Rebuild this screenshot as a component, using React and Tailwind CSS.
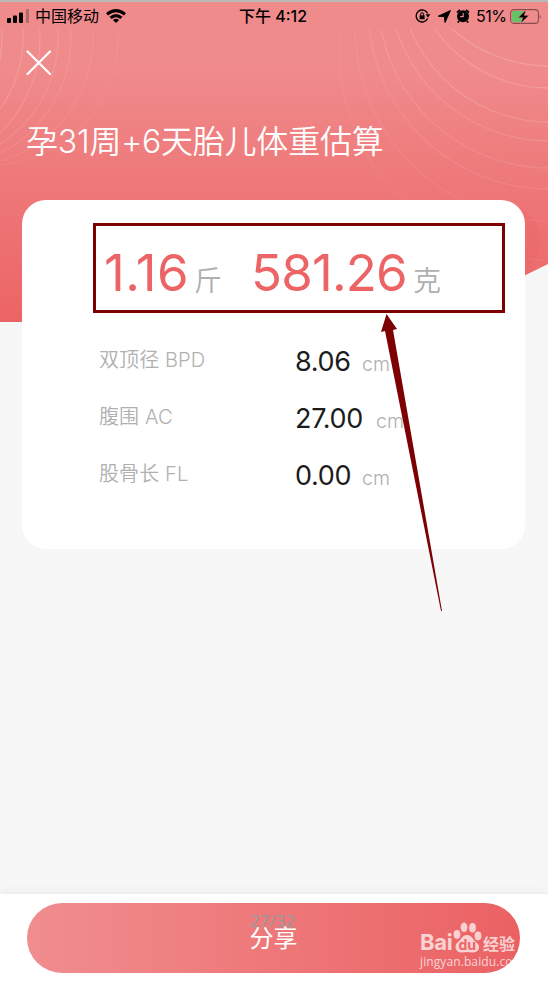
const rows = [
  { label: '双顶径 BPD', value: '8.06', w: 'w-[54px]' },
  { label: '腹围 AC', value: '27.00', w: 'w-[68px]' },
  { label: '股骨长 FL', value: '0.00', w: 'w-[54px]' },
];

const leftArcs = [[2, 110], [23, 121], [40, 133], [58, 126], [71, 129], [93, 128], [118, 127]];
const rightArcs = [[260, 210], [221, 194], [189, 181], [168, 171], [141, 160], [122, 150], [88, 140], [66, 146]];

function HeaderArt() {
  return (
    <svg className="absolute left-0 top-0" width="548" height="322" viewBox="0 0 548 322">
      <defs>
        <linearGradient id="head" x1="0" y1="0" x2="0" y2="1">
          <stop offset="0" stopColor="#f08b8c" />
          <stop offset="0.2" stopColor="#f08b8c" />
          <stop offset="0.62" stopColor="#ee7677" />
          <stop offset="1" stopColor="#ec6465" />
        </linearGradient>
        <clipPath id="shape"><path d="M0 2H548V264L430 322H0Z" /></clipPath>
        <clipPath id="below"><rect y="29" width="548" height="293" /></clipPath>
      </defs>
      <g clipPath="url(#shape)">
        <rect width="548" height="322" fill="url(#head)" />
        <circle cx="505" cy="240" r="35" fill="#ea5f62" fillOpacity="0.25" />
        <g clipPath="url(#below)" fill="none" stroke="#fff" strokeWidth="1.3">
          {leftArcs.map(([x, r], i) => (
            <circle key={x} cx={x - r} cy="38" r={r} strokeOpacity={0.16 - i * 0.018} />
          ))}
          {rightArcs.map(([b, r], i) => (
            <circle key={b} cx="549" cy={b - r} r={r} strokeOpacity={0.05 + i * 0.018} />
          ))}
        </g>
      </g>
      <rect width="548" height="2" fill="#b9b9b9" />
    </svg>
  );
}

function StatusBar() {
  return (
    <div className="relative flex h-[29px] items-center pt-[3px] text-black">
      <svg className="ml-[7px] shrink-0" width="22" height="14" viewBox="0 0 22 14">
        <rect x="0" y="9" width="4" height="5" rx="1" />
        <rect x="6" y="6.5" width="4" height="7.5" rx="1" />
        <rect x="12" y="3.5" width="4" height="10.5" rx="1" />
        <rect x="19" y="0" width="3" height="14" rx="1" opacity="0.25" />
      </svg>
      <span className="ml-[6px] w-[65px] whitespace-nowrap text-[16px] leading-[20px]">中国移动</span>
      <svg className="ml-[6px] shrink-0" width="20" height="14" viewBox="0 0 20 14">
        <path d="M0 4.3Q10-4.1 20 4.3L17.9 6.5Q10 0 2.1 6.5Z" />
        <path d="M3.5 7.8Q10 2.2 16.5 7.8L14.4 10Q10 6.3 5.6 10Z" />
        <path d="M6.9 11Q10 8.4 13.1 11L10 14Z" />
      </svg>
      <span className="ml-[113px] w-[69px] whitespace-nowrap text-[16px] font-medium leading-[20px]">下午 4:12</span>
      <svg className="ml-[107px] shrink-0" width="16" height="14" viewBox="0 0 16 14">
        <path d="M12.6 9.5A6 6 0 1 1 12.6 4.5" fill="none" stroke="#000" strokeWidth="1.4" />
        <path d="M10.8 5.3H15.2L13 8.8Z" />
        <rect x="4.6" y="6.2" width="5" height="4" rx="0.5" />
        <path d="M5.6 6.5V5.2a1.5 1.5 0 0 1 3 0V6.5" fill="none" stroke="#000" />
      </svg>
      <svg className="ml-[7px] shrink-0" width="13" height="13" viewBox="0 0 13 13">
        <path d="M0.3 6.2L12.4 0.6L7 12.4L6.4 6.6Z" stroke="#000" strokeWidth="1" strokeLinejoin="round" />
      </svg>
      <svg className="ml-[5px] shrink-0" width="14" height="14" viewBox="0 0 14 14">
        <circle cx="7" cy="7.3" r="6" />
        <path d="M1 3.5L4 .9M13 3.5L10 .9M3 12L1.8 13.6M11 12L12.2 13.6" stroke="#000" strokeWidth="1.8" />
        <path d="M7.2 4V7.6H4.2" fill="none" stroke="#f08b8c" strokeWidth="1.1" />
      </svg>
      <span className="ml-[6px] w-[31px] whitespace-nowrap text-[16px] leading-[20px] tracking-[-0.5px]">51%</span>
      <svg className="ml-[3px] shrink-0" width="32" height="15" viewBox="0 0 32 15">
        <rect x="0.6" y="0.6" width="27.8" height="13.8" rx="3.5" fill="none" stroke="#000" strokeOpacity="0.45" strokeWidth="1.1" />
        <rect x="2" y="2" width="12" height="11" rx="2" fill="#63c466" />
        <path d="M29.8 5Q31.6 7.5 29.8 10Z" opacity="0.5" />
        <path d="M16.2 0.6L8 8.8H12.8L10.6 14.4L19.2 6.3H14.4Z" stroke="#f08b8c" strokeWidth="0.6" />
      </svg>
    </div>
  );
}

function Watermark() {
  return (
    <div className="absolute left-[420px] top-[28px] h-[50px] w-[100px] text-white opacity-70">
      <div className="flex h-[31px] items-end">
        <span className="w-[33px] whitespace-nowrap text-[22px] font-bold leading-[22px] tracking-[-0.3px]">Bai</span>
        <svg className="shrink-0" width="29" height="31" viewBox="0 0 29 31" fill="#fff">
          <ellipse cx="4" cy="12.5" rx="3.4" ry="4.4" />
          <ellipse cx="11" cy="5.3" rx="3.4" ry="4.8" />
          <ellipse cx="19.5" cy="5.7" rx="3.4" ry="4.7" />
          <ellipse cx="25" cy="14" rx="3.4" ry="4.4" />
          <path d="M14 13C9 13 8 18 5 20C0 24 3 31 9 30.5Q14.5 29.5 19 30.5C26 31 28 25 24 21C20 18 19 13 14 13Z" />
          <text x="14.2" y="28" textAnchor="middle" fontSize="14" fontWeight="700" fill="#ec6768" fontFamily="Inter">du</text>
        </svg>
        <span className="ml-[1px] whitespace-nowrap text-[16px] font-bold leading-[17px]">经验</span>
      </div>
      <div className="whitespace-nowrap font-['Open_Sans'] text-[12px] font-medium leading-[18px] tracking-[0.1px]">jingyan.baidu.com</div>
    </div>
  );
}

export default function App() {
  return (
    <div className="relative flex h-[981px] w-[548px] flex-col overflow-hidden bg-[#f7f7f7] font-[Inter,'Noto_Sans_CJK_SC',sans-serif]">
      <HeaderArt />
      <StatusBar />
      <header className="relative h-[171px] pl-[26px] text-white">
        <svg className="mt-[21px]" width="25" height="25" viewBox="0 0 25 25" stroke="#fff" strokeWidth="2.2" strokeLinecap="round">
          <path d="M1.5 1.5L24 24M24 1.5L1.5 24" />
        </svg>
        <h1 className="mt-[43px] whitespace-nowrap text-[32px] font-[350] leading-[48px] tracking-[-0.2px]">孕31周+6天胎儿体重估算</h1>
      </header>

      <main className="relative ml-[22px] h-[349px] w-[503px] rounded-[24px] bg-white pt-[41px]">
        <div className="flex h-[64px] items-baseline pl-[82px] text-[#ec6466]">
          <span className="w-[84px] whitespace-nowrap text-[51px] font-[370] leading-[64px] tracking-[0.4px]">1.16</span>
          <span className="ml-[6px] w-[28px] text-[28px] font-[350] text-[#b0b0b0]">斤</span>
          <span className="ml-[29px] w-[156px] whitespace-nowrap text-[51px] font-[370] leading-[64px] tracking-[-0.8px]">581.26</span>
          <span className="ml-[6px] text-[28px] font-[350] text-[#b0b0b0]">克</span>
        </div>
        <div className="mt-[27px] flex flex-col">
          {rows.map((r) => (
            <div key={r.label} className="flex h-[57px] items-start whitespace-nowrap pl-[77px]">
              <span className="w-[196px] text-[20px] font-[350] leading-[57px] tracking-[0.1px] text-[#b0b0b0]">{r.label}</span>
              <div className="flex items-baseline leading-[59px]">
                <span className={`${r.w} text-[27px] font-normal tracking-[-0.3px] text-[#1c1c1c]`}>{r.value}</span>
                <span className="ml-[13px] text-[19.5px] font-[350] text-[#b0b0b0]">cm</span>
              </div>
            </div>
          ))}
        </div>
      </main>

      <footer className="relative mt-auto h-[87px] bg-white pl-[27px] pt-[9px] shadow-[0_-2px_8px_rgba(0,0,0,0.06)]">
        <button className="block h-[70px] w-[493px] rounded-full bg-gradient-to-r from-[#f08d8f] to-[#eb6163] text-[24px] leading-[67px] text-white">分享</button>
        <span className="absolute left-[250px] top-[17px] whitespace-nowrap font-['Noto_Sans'] text-[17px] leading-[20px] text-[#999]">27/32</span>
        <Watermark />
      </footer>

      <div className="absolute left-[93px] top-[223px] h-[90px] w-[412px] border-[3px] border-[#7d0003]" />
      <svg className="absolute left-[375px] top-[310px]" width="75" height="305" viewBox="375 310 75 305">
        <path d="M386.5 314L397 329L393 330L442 611H441L385 331L381 332Z" fill="#7d0003" />
      </svg>
    </div>
  );
}
